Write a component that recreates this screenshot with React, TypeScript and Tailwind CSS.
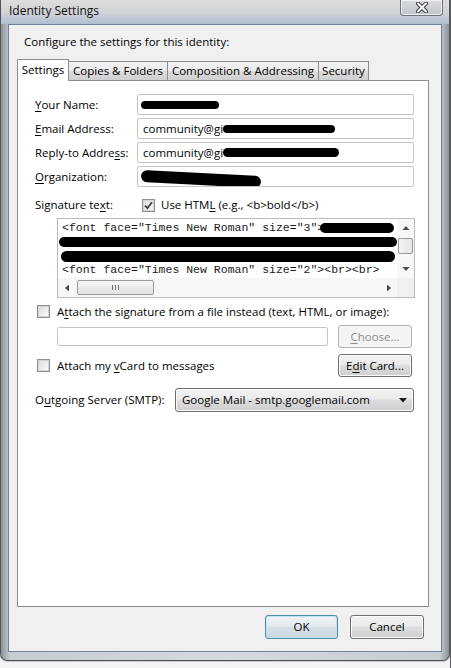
import React from "react";

const ui = "font-['Segoe_UI','Open_Sans',sans-serif] text-[11.5px] text-black";
const mono = "font-['Consolas','Liberation_Mono',monospace] text-[11.5px] leading-[14px] text-[#1a1a1a]";
const btnBg =
    "border border-[#707070] rounded-[3px] bg-[linear-gradient(#f2f2f2,#ebebeb_45%,#dddddd_50%,#cfcfcf)] shadow-[inset_0_0_0_1px_#fbfbfb]";

function U({children}: {children: React.ReactNode}) {
    return <span className="underline underline-offset-[2px] decoration-1">{children}</span>;
}

function Blot({w, h = 9, className = ""}: {w: number; h?: number; className?: string}) {
    return (
        <span
            className={`inline-block bg-black rounded-full align-middle ${className}`}
            style={{width: w, height: h}}
        />
    );
}

function Checkbox({checked}: {checked?: boolean}) {
    return (
        <span className="w-[13px] h-[13px] shrink-0 border border-[#8e8f8f] bg-white flex items-center justify-center">
            <span className="w-[11px] h-[11px] border border-[#d4d4d4] bg-[linear-gradient(135deg,#dcdcdc,#fafafa)] flex items-center justify-center">
                {checked && (
                    <svg width="9" height="9" viewBox="0 0 9 9">
                        <path d="M1 4.6 L3.4 7.2 L8 1.2" fill="none" stroke="#3c3c3c" strokeWidth="1.7" />
                    </svg>
                )}
            </span>
        </span>
    );
}

function Arrow({dir}: {dir: "up" | "down" | "left" | "right"}) {
    const d = {
        up: "M0.5 5 L4 1 L7.5 5 Z",
        down: "M0.5 2 L4 6 L7.5 2 Z",
        left: "M5 0.5 L1 4 L5 7.5 Z",
        right: "M2 0.5 L6 4 L2 7.5 Z",
    }[dir];
    return (
        <svg width="8" height="8" viewBox="0 0 8 8">
            <path d={d} fill="#4d4d4d" />
        </svg>
    );
}

function TextBox({children, className = ""}: {children?: React.ReactNode; className?: string}) {
    return (
        <div
            className={`h-[21px] border border-[#c3c5cb] rounded-[2px] bg-white flex items-center pl-[5px] overflow-hidden whitespace-nowrap ${className}`}
        >
            {children}
        </div>
    );
}

const tabBase = "h-[19px] border border-b-0 border-[#898c95] flex items-center justify-center bg-[linear-gradient(#f2f2f2,#ebebeb_50%,#dddddd_50%,#cfcfcf)] -ml-px";

export default function App() {
    return (
        <div className={`w-[451px] h-[668px] bg-[#f3f3f3] flex overflow-hidden ${ui}`}>
            <div className="w-[450px] h-[661px] flex flex-col px-[7px] pb-[8px] border border-t-0 border-[#505458] rounded-b-[7px] bg-[linear-gradient(90deg,#8d9298,#c7ccd2_2%,#d6d9dd_50%,#c7ccd2_98%,#8d9298)] shadow-[0_1px_0_#c8c8c8]">
                {/* title bar */}
                <div className="h-[24px] -mx-[7px] px-[8px] flex items-start justify-between bg-[linear-gradient(180deg,#dcdddf,#cfd2d6_55%,#b0bfcf)]">
                    <span className="text-[12px] leading-[22px] text-[#111]">Identity Settings</span>
                    <div className="w-[43px] h-[16px] -mr-[2px] rounded-b-[4px] border border-t-0 border-[#6e7379] bg-[linear-gradient(#d8dbdf,#c2c7cd)] shadow-[inset_0_0_0_1px_#eef0f2] flex items-center justify-center">
                        <svg width="14" height="11" viewBox="0 0 14 11">
                            <path d="M3 1.5 L11 9.5 M11 1.5 L3 9.5" stroke="#3d4046" strokeWidth="4" strokeLinecap="round" />
                            <path d="M3 1.5 L11 9.5 M11 1.5 L3 9.5" stroke="#ffffff" strokeWidth="2" strokeLinecap="round" />
                        </svg>
                    </div>
                </div>

                {/* client area */}
                <div className="flex-1 border border-[#6f8296] bg-[#f0f0f0] flex flex-col">
                    <div className="pl-[15px] pt-[9px] leading-[16px] h-[25px]">Configure the settings for this identity:</div>

                    {/* tabs */}
                    <div className="mt-[9px] ml-[8px] h-[21px] flex items-end">
                        <div className="relative z-10 w-[52px] h-[22px] -mb-px border border-b-0 border-[#898c95] bg-white flex items-center justify-center pb-[1px]">
                            Settings
                        </div>
                        <div className={`${tabBase} w-[100px]`}>Copies &amp; Folders</div>
                        <div className={`${tabBase} w-[152px]`}>Composition &amp; Addressing</div>
                        <div className={`${tabBase} w-[51px]`}>Security</div>
                    </div>

                    {/* tab panel */}
                    <div className="ml-[8px] w-[412px] h-[527px] border border-[#898c95] bg-white flex flex-col pl-[17px] pt-[13px]">
                        <div className="flex flex-col gap-[3px]">
                            <div className="flex items-center h-[21px]">
                                <span className="w-[102px]"><U>Y</U>our Name:</span>
                                <TextBox className="w-[277px]">
                                    <Blot w={78} h={8} className="-ml-[2px]" />
                                </TextBox>
                            </div>
                            <div className="flex items-center h-[21px]">
                                <span className="w-[102px]"><U>E</U>mail Address:</span>
                                <TextBox className="w-[277px]">
                                    community@gi
                                    <Blot w={112} h={8} />
                                </TextBox>
                            </div>
                            <div className="flex items-center h-[21px]">
                                <span className="w-[102px]">Reply-to Addre<U>s</U>s:</span>
                                <TextBox className="w-[277px]">
                                    community@gi
                                    <Blot w={116} h={9} />
                                </TextBox>
                            </div>
                            <div className="flex items-center h-[21px]">
                                <span className="w-[102px]"><U>O</U>rganization:</span>
                                <TextBox className="w-[277px]">
                                    <Blot w={120} h={12} className="-ml-[2px] mt-[4px] rotate-[3deg]" />
                                </TextBox>
                            </div>
                        </div>

                        {/* signature */}
                        <div className="mt-[10px] h-[16px] flex items-center">
                            <span className="w-[107px]">Signature te<U>x</U>t:</span>
                            <Checkbox checked />
                            <span className="ml-[6px]">Use HTM<U>L</U> (e.g., &lt;b&gt;bold&lt;/b&gt;)</span>
                        </div>

                        <div className="mt-[5px] ml-[22px] w-[358px] h-[80px] border border-[#b9bcc2] flex flex-col">
                            <div className="flex h-[59px]">
                                <div className={`flex-1 pl-[4px] pt-[2px] overflow-hidden whitespace-pre ${mono}`}>
                                    <div className="h-[14px] flex items-center">
                                        &lt;font face="Times New Roman" size="3"&gt;<Blot w={74} h={10} className="-ml-[4px]" />
                                    </div>
                                    <div className="h-[14px] flex items-center">
                                        <Blot w={338} h={10} className="-ml-[3px]" />
                                    </div>
                                    <div className="h-[14px] flex items-center">
                                        <Blot w={334} h={11} className="-ml-[1px]" />
                                    </div>
                                    <div className="h-[14px] flex items-center">
                                        &lt;font face="Times New Roman" size="2"&gt;&lt;br&gt;&lt;br&gt;
                                    </div>
                                </div>
                                {/* vertical scrollbar */}
                                <div className="w-[17px] bg-[#f7f7f7] flex flex-col items-center">
                                    <div className="h-[19px] flex items-center justify-center"><Arrow dir="up" /></div>
                                    <div className="w-[15px] h-[16px] rounded-[2px] border border-[#9a9a9a] bg-[linear-gradient(90deg,#f5f5f5,#e4e4e4)]" />
                                    <div className="flex-1 flex items-end justify-center pb-[5px]"><Arrow dir="down" /></div>
                                </div>
                            </div>
                            {/* horizontal scrollbar */}
                            <div className="flex h-[19px]">
                                <div className="flex-1 bg-[#f7f7f7] flex items-center">
                                    <div className="w-[19px] flex justify-center"><Arrow dir="left" /></div>
                                    <div className="w-[77px] h-[15px] rounded-[2px] border border-[#9a9a9a] bg-[linear-gradient(#f5f5f5,#e2e2e2)] flex items-center justify-center gap-[1px]">
                                        <span className="w-px h-[5px] bg-[#6e6e6e]" />
                                        <span className="w-px h-[5px] bg-[#6e6e6e] ml-[1px]" />
                                        <span className="w-px h-[5px] bg-[#6e6e6e] ml-[1px]" />
                                    </div>
                                    <div className="flex-1 flex justify-end pr-[4px]"><Arrow dir="right" /></div>
                                </div>
                                <div className="w-[17px] bg-[#f0f0f0]" />
                            </div>
                        </div>

                        {/* attach file */}
                        <div className="mt-[7px] h-[13px] flex items-center">
                            <span className="ml-[2px]"><Checkbox /></span>
                            <span className="ml-[7px]">A<U>t</U>tach the signature from a file instead (text, HTML, or image):</span>
                        </div>
                        <div className="mt-[7px] h-[23px] flex items-center pl-[22px]">
                            <div className="w-[271px] h-[19px] border border-[#c3c5cb] rounded-[2px] bg-white" />
                            <div className="ml-[10px] w-[74px] h-[23px] rounded-[3px] border border-[#adb2b5] bg-[#f4f4f4] text-[#8d8d8d] flex items-center justify-center">
                                <U>C</U>hoose...
                            </div>
                        </div>

                        {/* vcard */}
                        <div className="mt-[6px] h-[23px] flex items-center">
                            <div className="w-[303px] flex items-center">
                                <span className="ml-[2px]"><Checkbox /></span>
                                <span className="ml-[7px]">Attach my <U>v</U>Card to messages</span>
                            </div>
                            <div className={`w-[74px] h-[23px] flex items-center justify-center ${btnBg}`}>
                                E<U>d</U>it Card...
                            </div>
                        </div>

                        {/* smtp */}
                        <div className="mt-[11px] h-[24px] flex items-center">
                            <span className="w-[140px]">O<U>u</U>tgoing Server (SMTP):</span>
                            <div className={`w-[239px] h-[24px] flex items-center pl-[6px] pr-[6px] ${btnBg}`}>
                                <span className="flex-1">Google Mail - smtp.googlemail.com</span>
                                <svg width="8" height="5" viewBox="0 0 8 5">
                                    <path d="M0 0 L8 0 L4 4.5 Z" fill="#1a1a1a" />
                                </svg>
                            </div>
                        </div>
                    </div>

                    {/* dialog buttons */}
                    <div className="mt-[8px] flex justify-end gap-[12px] pr-[17px]">
                        <div className="w-[73px] h-[24px] rounded-[3px] border border-[#4f8ca6] bg-[linear-gradient(#eef3f6,#e4ecf0_45%,#d6e1e7_50%,#cbd8df)] shadow-[inset_0_0_0_1px_#bfe3f2] flex items-center justify-center">
                            OK
                        </div>
                        <div className={`w-[74px] h-[24px] flex items-center justify-center ${btnBg}`}>Cancel</div>
                    </div>
                </div>
            </div>
            <div className="flex-1 h-full bg-[#5a5d61]" />
        </div>
    );
}
